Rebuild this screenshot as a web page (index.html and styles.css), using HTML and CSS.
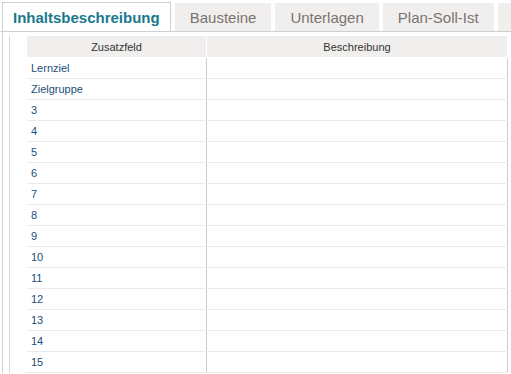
FILE: index.html
```html
<!DOCTYPE html>
<html lang="de">
<head>
<meta charset="utf-8">
<title>Inhaltsbeschreibung</title>
<link rel="stylesheet" href="styles.css">
</head>
<body>
<div class="tabs">
  <div class="tab active">Inhaltsbeschreibung</div>
  <div class="tab">Bausteine</div>
  <div class="tab">Unterlagen</div>
  <div class="tab">Plan-Soll-Ist</div>
  <div class="tab tab-more"></div>
</div>
<div class="panel">
  <div class="grid">
    <div class="gutter"></div>
    <div class="table">
      <div class="head">
        <div class="cell c1">Zusatzfeld</div>
        <div class="cell c2">Beschreibung</div>
      </div>
      <div class="row"><div class="cell c1">Lernziel</div><div class="cell c2"></div></div>
      <div class="row"><div class="cell c1">Zielgruppe</div><div class="cell c2"></div></div>
      <div class="row"><div class="cell c1">3</div><div class="cell c2"></div></div>
      <div class="row"><div class="cell c1">4</div><div class="cell c2"></div></div>
      <div class="row"><div class="cell c1">5</div><div class="cell c2"></div></div>
      <div class="row"><div class="cell c1">6</div><div class="cell c2"></div></div>
      <div class="row"><div class="cell c1">7</div><div class="cell c2"></div></div>
      <div class="row"><div class="cell c1">8</div><div class="cell c2"></div></div>
      <div class="row"><div class="cell c1">9</div><div class="cell c2"></div></div>
      <div class="row"><div class="cell c1">10</div><div class="cell c2"></div></div>
      <div class="row"><div class="cell c1">11</div><div class="cell c2"></div></div>
      <div class="row"><div class="cell c1">12</div><div class="cell c2"></div></div>
      <div class="row"><div class="cell c1">13</div><div class="cell c2"></div></div>
      <div class="row"><div class="cell c1">14</div><div class="cell c2"></div></div>
      <div class="row"><div class="cell c1">15</div><div class="cell c2"></div></div>
    </div>
  </div>
</div>
</body>
</html>
```

FILE: styles.css
```css
html, body {
  margin: 0;
  padding: 0;
  background: #fff;
  font-family: "Liberation Sans", Arial, sans-serif;
  overflow: hidden;
  width: 511px;
  height: 374px;
}

.tabs {
  display: flex;
  align-items: flex-end;
  gap: 4px;
  padding: 2px 0 0 2px;
  height: 29px;
  border-bottom: 1px solid #cfcfcf;
  white-space: nowrap;
  overflow: hidden;
}

.tab {
  flex: none;
  height: 28px;
  padding: 0 15px;
  display: flex;
  align-items: center;
  background: #f0efee;
  color: #7a7370;
  font-size: 15px;
}

.tab-more {
  width: 40px;
  padding: 0;
}

.tab.active {
  height: 29px;
  padding: 0 10px;
  margin-bottom: -1px;
  border: 1px solid #cfcfcf;
  border-bottom: none;
  background: #fff;
  color: #17798b;
  font-weight: bold;
}

.panel {
  margin-left: 2px;
  border-left: 1px solid #d0d0d0;
  padding: 4px 0 0 6px;
}

.grid {
  display: flex;
  border-left: 1px solid #d8d8d8;
}

.gutter {
  width: 17px;
  flex: none;
}

.table {
  width: 481px;
  flex: none;
}

.head, .row {
  display: flex;
}

.head {
  height: 21px;
  border-bottom: 1px solid #fff;
  background: #f0efee;
}

.head .cell {
  display: flex;
  align-items: center;
  justify-content: center;
  border-right: 1px solid #fff;
  color: #333;
  font-size: 11px;
}

.row {
  height: 20px;
  border-bottom: 1px solid #ebebeb;
}

.row .cell {
  display: flex;
  align-items: center;
  padding-left: 4px;
  border-right: 1px solid #cdcdcd;
  color: #1b4f78;
  font-size: 11px;
}

.c1 {
  width: 179px;
  flex: none;
}

.row .c1 {
  width: 175px;
}

.c2 {
  width: 300px;
  flex: none;
}

.row .c2 {
  width: 296px;
}
```
